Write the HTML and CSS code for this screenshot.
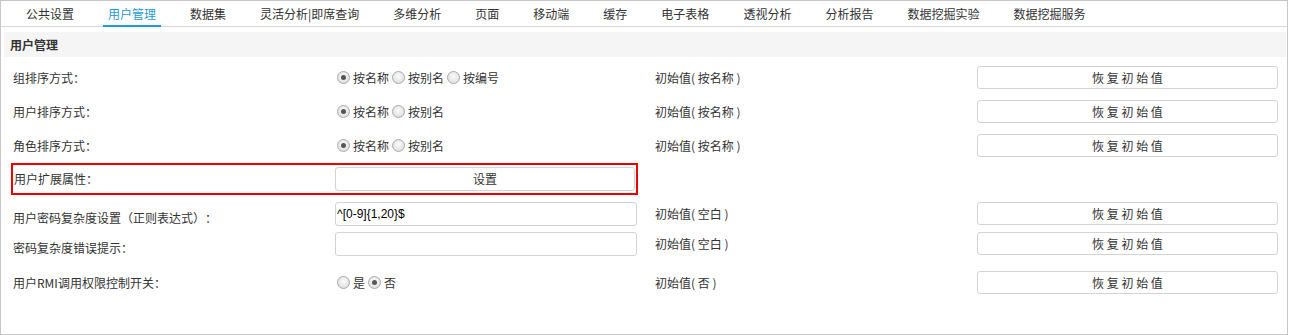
FILE: index.html
```html
<!DOCTYPE html>
<html lang="zh-CN">
<head>
<meta charset="utf-8">
<title>用户管理</title>
<link rel="stylesheet" href="styles.css">
</head>
<body>
<div class="page">
  <nav class="tabs">
    <span class="tab">公共设置</span>
    <span class="tab active">用户管理</span>
    <span class="tab">数据集</span>
    <span class="tab">灵活分析|即席查询</span>
    <span class="tab">多维分析</span>
    <span class="tab">页面</span>
    <span class="tab">移动端</span>
    <span class="tab">缓存</span>
    <span class="tab">电子表格</span>
    <span class="tab">透视分析</span>
    <span class="tab">分析报告</span>
    <span class="tab">数据挖掘实验</span>
    <span class="tab">数据挖掘服务</span>
  </nav>

  <div class="section-title">用户管理</div>

  <div class="rows">
    <div class="row">
      <div class="label">组排序方式：</div>
      <div class="control radios">
        <span class="radio checked"></span><span class="opt">按名称</span>
        <span class="radio"></span><span class="opt">按别名</span>
        <span class="radio"></span><span class="opt">按编号</span>
      </div>
      <div class="init">初始值( 按名称 )</div>
      <button class="btn">恢 复 初 始 值</button>
    </div>

    <div class="row">
      <div class="label">用户排序方式：</div>
      <div class="control radios">
        <span class="radio checked"></span><span class="opt">按名称</span>
        <span class="radio"></span><span class="opt">按别名</span>
      </div>
      <div class="init">初始值( 按名称 )</div>
      <button class="btn">恢 复 初 始 值</button>
    </div>

    <div class="row">
      <div class="label">角色排序方式：</div>
      <div class="control radios">
        <span class="radio checked"></span><span class="opt">按名称</span>
        <span class="radio"></span><span class="opt">按别名</span>
      </div>
      <div class="init">初始值( 按名称 )</div>
      <button class="btn">恢 复 初 始 值</button>
    </div>

    <div class="highlight">
      <div class="label">用户扩展属性：</div>
      <button class="btn btn-set">设置</button>
    </div>

    <div class="row compact">
      <div class="label low">用户密码复杂度设置（正则表达式）：</div>
      <input class="text-input" type="text" value="^[0-9]{1,20}$">
      <div class="init">初始值( 空白 )</div>
      <button class="btn">恢 复 初 始 值</button>
    </div>

    <div class="row compact">
      <div class="label low">密码复杂度错误提示：</div>
      <input class="text-input" type="text" value="">
      <div class="init">初始值( 空白 )</div>
      <button class="btn">恢 复 初 始 值</button>
    </div>

    <div class="row last">
      <div class="label">用户RMI调用权限控制开关：</div>
      <div class="control radios">
        <span class="radio"></span><span class="opt">是</span>
        <span class="radio checked"></span><span class="opt">否</span>
      </div>
      <div class="init">初始值( 否 )</div>
      <button class="btn">恢 复 初 始 值</button>
    </div>
  </div>
</div>
</body>
</html>
```

FILE: styles.css
```css
* {
  box-sizing: border-box;
}

html, body {
  margin: 0;
  padding: 0;
  background: #ffffff;
}

body {
  font-family: "Noto Sans CJK SC", "Liberation Sans", sans-serif;
  font-size: 12px;
  line-height: 16px;
  color: #333333;
  text-spacing-trim: space-all;
}

.page {
  width: 1288px;
  height: 335px;
  border: 1px solid #c6c6c6;
  overflow: hidden;
}

/* Tabs */
.tabs {
  display: flex;
  align-items: flex-start;
  gap: 24px;
  height: 26px;
  padding-left: 20px;
  border-bottom: 1px solid #d6d6d6;
}

.tab {
  padding: 2px 5px 0;
  line-height: 22px;
  height: 26px;
  border-bottom: 2px solid transparent;
  white-space: nowrap;
  color: #333333;
}

.tab.active {
  color: #1e9ad6;
  border-bottom-color: #1e9ad6;
}

/* Section header */
.section-title {
  margin: 5px 1px 0 3px;
  height: 25px;
  line-height: 25px;
  padding-left: 6px;
  background: #f5f5f5;
  font-weight: bold;
  color: #333333;
}

/* Rows */
.rows {
  padding-top: 3px;
}

.row {
  display: grid;
  grid-template-columns: 322px 320px 322px 301px;
  align-items: center;
  height: 34px;
  padding: 6px 0 5px 12px;
}

.row.compact {
  height: 24px;
  padding: 0 0 0 12px;
  margin-top: 6px;
}

.row.last {
  height: 23px;
  padding: 0 0 0 12px;
  margin-top: 16px;
}

.label {
  white-space: nowrap;
}

.label.low {
  padding-top: 9px;
}

.control {
  display: flex;
  align-items: center;
}

.radios {
  padding-left: 2px;
}

.radio {
  display: inline-block;
  width: 13px;
  height: 13px;
  border-radius: 50%;
  border: 1px solid #a9a9a9;
  background: radial-gradient(circle at 50% 40%, #fbfbfb 0%, #e6e6e6 60%, #d4d4d4 100%);
  position: relative;
  flex: none;
}

.radio.checked::after {
  content: "";
  position: absolute;
  left: 3px;
  top: 3px;
  width: 5px;
  height: 5px;
  border-radius: 50%;
  background: #555555;
}

.opt {
  margin: 0 3px 0 3px;
  white-space: nowrap;
}

.init {
  white-space: nowrap;
}

.btn {
  font-family: "Noto Sans CJK SC", "Liberation Sans", sans-serif;
  font-size: 12px;
  color: #333333;
  background: #ffffff;
  border: 1px solid #d3d3d3;
  border-radius: 3px;
  height: 23px;
  width: 301px;
  padding: 0;
  line-height: 21px;
  text-align: center;
}

.text-input {
  font-family: "Liberation Sans", "Noto Sans CJK SC", sans-serif;
  font-size: 12px;
  color: #000000;
  width: 302px;
  height: 24px;
  border: 1px solid #d3d3d3;
  border-radius: 3px;
  padding: 0 1px;
  background: #ffffff;
  outline: none;
}

/* Highlighted row */
.highlight {
  display: grid;
  grid-template-columns: 322px 300px;
  align-items: center;
  width: 627px;
  height: 32px;
  margin: 1px 0 0 10px;
  border: 2px solid #ee0000;
}

.highlight .label {
  padding-left: 1px;
}

.btn-set {
  width: 300px;
  height: 24px;
  line-height: 22px;
}
```
